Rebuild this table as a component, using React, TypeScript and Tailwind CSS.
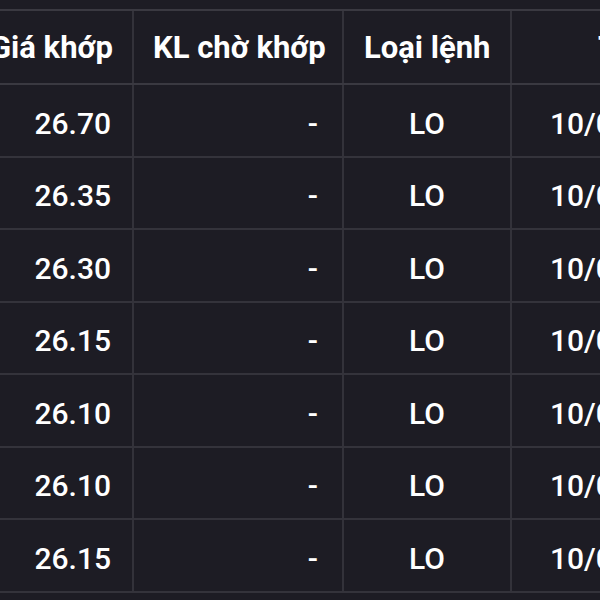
const rows = ['26.70', '26.35', '26.30', '26.15', '26.10', '26.10', '26.15'];

export default function App() {
  return (
    <div className="w-[600px] h-[600px] overflow-hidden bg-[#1d1c24] text-white pt-[9px] font-['Roboto',sans-serif]">
      <div className="ml-[-40px] w-[760px]">
        {/* header */}
        <div className="flex h-[76px] border-y-2 border-[#3a3941] text-[31px] font-bold">
          <div className="w-[174px] shrink-0 flex items-center justify-end pr-[19px] pt-[2px] border-r-2 border-[#33323a] whitespace-nowrap">
            Giá khớp
          </div>
          <div className="w-[210px] shrink-0 flex items-center pl-[19px] pt-[2px] border-r-2 border-[#33323a] whitespace-nowrap">
            KL chờ khớp
          </div>
          <div className="w-[168px] shrink-0 flex items-center pl-[20px] pt-[2px] border-r-2 border-[#33323a] whitespace-nowrap">
            Loại lệnh
          </div>
          <div className="w-[200px] shrink-0 flex items-center pl-[86px] pt-[2px] whitespace-nowrap">
            Thời gian
          </div>
        </div>
        {rows.map((p, i) => (
          <div
            key={i}
            className="flex h-[72.5px] border-b-2 border-[#34333b] text-[30px] font-medium"
          >
            <div className="w-[174px] shrink-0 flex items-center justify-end pr-[21px] pt-[6px] border-r-2 border-[#33323a]">
              {p}
            </div>
            <div className="w-[210px] shrink-0 flex items-center justify-end pr-[24px] pt-[6px] border-r-2 border-[#33323a]">
              -
            </div>
            <div className="w-[168px] shrink-0 flex items-center justify-center pt-[6px] border-r-2 border-[#33323a]">
              LO
            </div>
            <div className="w-[200px] shrink-0 flex items-center pl-[38px] pt-[6px] whitespace-nowrap">
              10/03/2023
            </div>
          </div>
        ))}
      </div>
    </div>
  );
}
